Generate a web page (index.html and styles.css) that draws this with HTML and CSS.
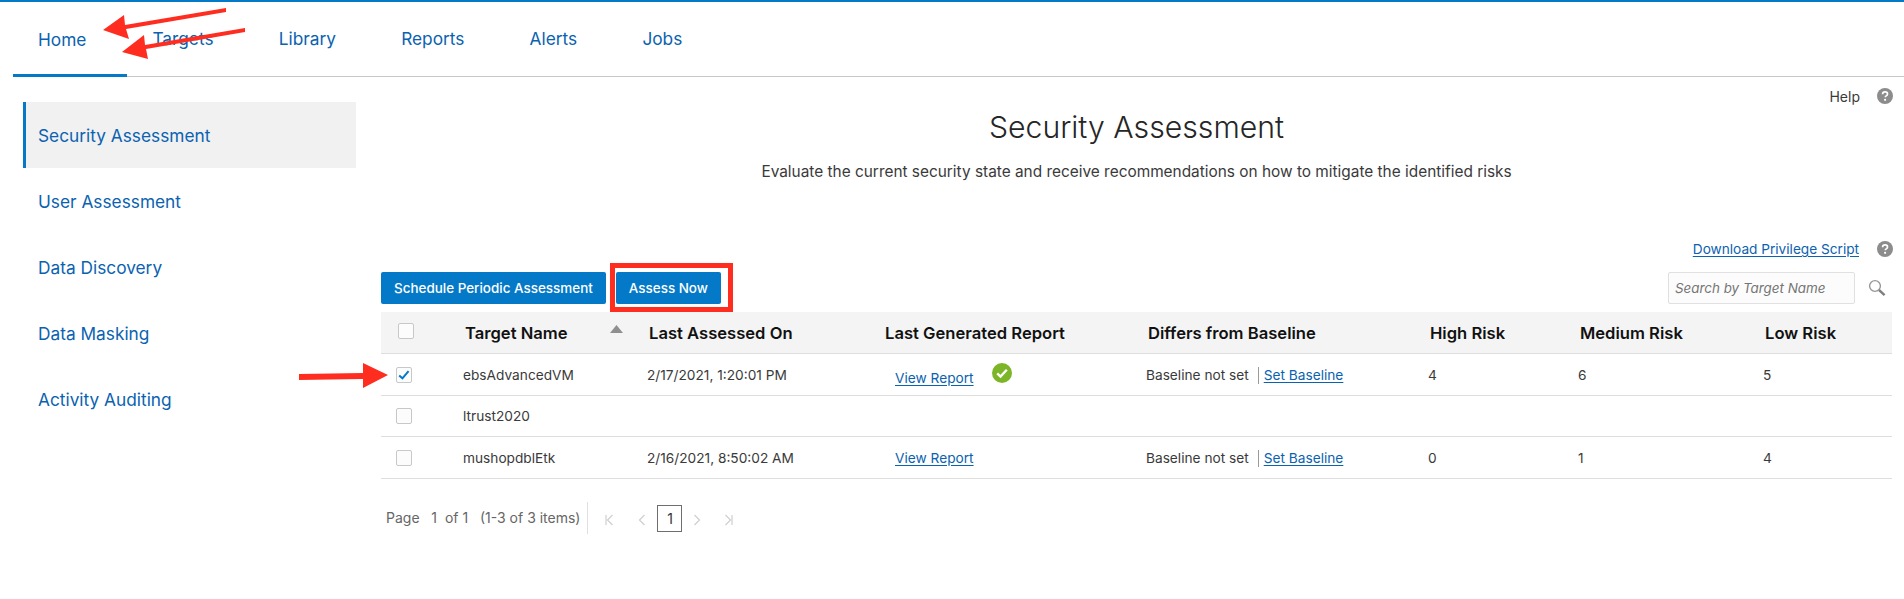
FILE: index.html
```html
<!DOCTYPE html>
<html lang="en">
<head>
<meta charset="utf-8">
<title>Security Assessment</title>
<link rel="stylesheet" href="styles.css">
</head>
<body>
<div class="app">
  <nav class="tabs">
    <a class="tab active">Home</a>
    <a class="tab">Targets</a>
    <a class="tab">Library</a>
    <a class="tab">Reports</a>
    <a class="tab">Alerts</a>
    <a class="tab">Jobs</a>
  </nav>
  <div class="body">
    <aside class="side">
      <a class="side-item active">Security Assessment</a>
      <a class="side-item">User Assessment</a>
      <a class="side-item">Data Discovery</a>
      <a class="side-item">Data Masking</a>
      <a class="side-item">Activity Auditing</a>
    </aside>
    <main class="main">
      <div class="help-row">
        <span class="help-text">Help</span>
        <svg class="help-icon" viewBox="0 0 16 16"><circle cx="8" cy="8" r="8" fill="#8c8c8c"/><path d="M5.6 6.2c0-1.4 1-2.3 2.5-2.3s2.4.8 2.4 2c0 1-.5 1.5-1.3 2-.6.4-.9.7-.9 1.4" fill="none" stroke="#fff" stroke-width="1.7"/><circle cx="8.1" cy="11.8" r="1.1" fill="#fff"/></svg>
      </div>
      <h1 class="title">Security Assessment</h1>
      <p class="subtitle">Evaluate the current security state and receive recommendations on how to mitigate the identified risks</p>
      <div class="download-row">
        <a class="link">Download Privilege Script</a>
        <svg class="help-icon" viewBox="0 0 16 16"><circle cx="8" cy="8" r="8" fill="#8c8c8c"/><path d="M5.6 6.2c0-1.4 1-2.3 2.5-2.3s2.4.8 2.4 2c0 1-.5 1.5-1.3 2-.6.4-.9.7-.9 1.4" fill="none" stroke="#fff" stroke-width="1.7"/><circle cx="8.1" cy="11.8" r="1.1" fill="#fff"/></svg>
      </div>
      <div class="toolbar">
        <button class="btn">Schedule Periodic Assessment</button>
        <button class="btn btn-marked">Assess Now<span class="red-box"></span></button>
        <div class="search">
          <span class="search-box">Search by Target Name</span>
          <svg class="search-icon" viewBox="0 0 18 18"><circle cx="7" cy="7" r="5.4" fill="none" stroke="#979797" stroke-width="1.4"/><path d="M11 11l5.6 5.2" stroke="#808080" stroke-width="2.4"/></svg>
        </div>
      </div>
      <div class="table">
        <div class="row head">
          <span class="cell"><span class="check head-check"></span></span>
          <span class="cell name">Target Name<svg class="sort" viewBox="0 0 13 8"><path d="M6.500 0L13 8H0z" fill="#8f8f8f"/></svg></span>
          <span class="cell">Last Assessed On</span>
          <span class="cell">Last Generated Report</span>
          <span class="cell">Differs from Baseline</span>
          <span class="cell">High Risk</span>
          <span class="cell">Medium Risk</span>
          <span class="cell">Low Risk</span>
        </div>
        <div class="row">
          <span class="cell"><span class="check"><svg viewBox="0 0 16 16"><path d="M2.500 8.500l3.700 3.300 7-8.300" fill="none" stroke="#0479c7" stroke-width="2.300"/></svg></span></span>
          <span class="cell">ebsAdvancedVM</span>
          <span class="cell">2/17/2021, 1:20:01 PM</span>
          <span class="cell report report-ok"><a class="link">View Report</a><svg class="ok" viewBox="0 0 20 20"><circle cx="10" cy="10" r="10" fill="#7cb526"/><path d="M5.200 10.300l3.300 3.200 6.300-6.800" fill="none" stroke="#fff" stroke-width="2.400"/></svg></span>
          <span class="cell baseline">Baseline not set<a class="link set">Set Baseline</a></span>
          <span class="cell">4</span>
          <span class="cell">6</span>
          <span class="cell">5</span>
        </div>
        <div class="row short">
          <span class="cell"><span class="check"></span></span>
          <span class="cell">ltrust2020</span>
          <span class="cell"></span>
          <span class="cell report"></span>
          <span class="cell baseline"></span>
          <span class="cell"></span>
          <span class="cell"></span>
          <span class="cell"></span>
        </div>
        <div class="row">
          <span class="cell"><span class="check"></span></span>
          <span class="cell">mushopdblEtk</span>
          <span class="cell">2/16/2021, 8:50:02 AM</span>
          <span class="cell report"><a class="link">View Report</a></span>
          <span class="cell baseline">Baseline not set<a class="link set">Set Baseline</a></span>
          <span class="cell">0</span>
          <span class="cell">1</span>
          <span class="cell">4</span>
        </div>
      </div>
      <div class="pager">
        <span class="pager-text">Page&nbsp;&nbsp; 1 &nbsp;of 1 &nbsp; (1-3 of 3 items)</span>
        <svg class="pg first" viewBox="0 0 8 12"><path d="M1 1v10M7.500 1L2.500 6l5 5" fill="none" stroke="#cfcfcf" stroke-width="1.200"/></svg>
        <svg class="pg prev" viewBox="0 0 8 12"><path d="M6.500 1L1.500 6l5 5" fill="none" stroke="#cfcfcf" stroke-width="1.200"/></svg>
        <span class="page-box">1</span>
        <svg class="pg next" viewBox="0 0 8 12"><path d="M1.500 1l5 5-5 5" fill="none" stroke="#cfcfcf" stroke-width="1.200"/></svg>
        <svg class="pg last" viewBox="0 0 8 12"><path d="M7 1v10M.5 1l5 5-5 5" fill="none" stroke="#cfcfcf" stroke-width="1.200"/></svg>
      </div>
    </main>
  </div>
</div>
<svg class="arrows" width="1904" height="599" viewBox="0 0 1904 599">
  <path d="M226 8L226 12L126 29L129 39L103 30L124 15L125 25Z" fill="#ff2d20"/>
  <path d="M245 28L245 32L146 49L148 59L122 52L144 35L145 45Z" fill="#ff2d20"/>
  <path d="M299 374L363 373L363 363L388 375L363 388L363 379L299 380Z" fill="#ff2d20"/>
</svg>
</body>
</html>
```
FILE: styles.css
```css
* { box-sizing: border-box; }
html, body { margin: 0; padding: 0; background: #fff; }
body {
  font-family: Inter, "Liberation Sans", sans-serif;
  color: #3a3a3a;
  height: 599px;
  overflow: hidden;
  position: relative;
}
.app { border-top: 2px solid #0479c7; }

.tabs {
  display: flex;
  height: 75px;
  margin-left: 13px;
  border-bottom: 1px solid #c8c8c8;
}
.tab {
  display: flex;
  align-items: center;
  padding: 0 40.2px 1px 25px;
  font-size: 17.3px;
  color: #0a62b0;
}
.tab.active { box-shadow: inset 0 -3px 0 #0479c7; padding-right: 41px; height: 75px; }

.body { display: flex; }
.side { width: 356px; padding: 25px 0 0 23px; flex: none; }
.side-item {
  display: flex;
  align-items: center;
  height: 66px;
  padding: 1px 0 0 15px;
  font-size: 17.3px;
  color: #0a62b0;
}
.side-item.active { background: #f1f1f1; border-left: 3px solid #0479c7; padding-left: 12px; }

.main { width: 1511px; margin-left: 25px; flex: none; }
.help-row {
  display: flex;
  justify-content: flex-end;
  align-items: center;
  height: 16px;
  margin-top: 11px;
  margin-right: -1px;
  font-size: 14px;
  gap: 17px;
}
.help-icon { width: 16px; height: 16px; display: block; flex: none; }
.title {
  margin: 3px 0 0;
  text-align: center;
  font-size: 30.2px;
  line-height: 40px;
  font-weight: 300;
  color: #262626;
}
.subtitle {
  margin: 15px 0 0;
  text-align: center;
  font-size: 15.4px;
  line-height: 20px;
  color: #3a3a3a;
}
.download-row {
  display: flex;
  justify-content: flex-end;
  align-items: center;
  gap: 18px;
  height: 16px;
  margin-top: 59px;
  margin-right: -1px;
  font-size: 13.65px;
}
.link { color: #0a62b0; text-decoration: underline; text-underline-offset: 2px; }

.toolbar { display: flex; align-items: center; margin-top: 15px; height: 32px; gap: 10px; }
.btn {
  height: 32px;
  padding: 0 13px;
  border: 0;
  border-radius: 2px;
  background: #0479c7;
  color: #fff;
  font: 500 13.45px Inter, "Liberation Sans", sans-serif;
}
.btn-marked { position: relative; }
.red-box {
  position: absolute;
  left: -6px;
  right: -12px;
  top: -9px;
  bottom: -8px;
  border: 5px solid #ff2d20;
}
.search { margin-left: auto; display: flex; align-items: center; margin-right: 6px; }
.search-box {
  width: 187px;
  height: 32px;
  padding-left: 6px;
  line-height: 30px;
  border: 1px solid #e0e0e0;
  border-radius: 2px;
  background: #fcfcfc;
  color: #757575;
  font-size: 13.4px;
  font-style: italic;
}
.search-icon { width: 18px; height: 18px; margin-left: 13px; }

.table { margin-top: 8px; }
.row {
  display: grid;
  grid-template-columns: 82px 184px 236px 263px 282px 150px 185px 129px;
  height: 42px;
  border-bottom: 1px solid #dedede;
  font-size: 13.7px;
  color: #3a3a3a;
  align-items: center;
}
.row .report { padding-left: 12px; }
.cell { display: flex; align-items: center; }
.row.short { height: 41px; }
.head {
  background: #f4f4f4;
  color: #111;
  font-size: 16.6px;
  font-weight: 600;
}
.head .cell { padding-left: 2px; }
.head .cell:first-child { padding-left: 0; }
.name { position: relative; }
.sort { position: absolute; left: 147px; top: 2px; width: 13px; height: 8px; }
.check {
  display: block;
  width: 16px;
  height: 16px;
  margin-left: 15px;
  border: 1px solid #c8c8c8;
  border-radius: 2px;
  background: #fcfcfc;
}
.check svg { display: block; width: 14px; height: 14px; }
.head-check { margin-left: 17px; margin-top: -4px; }
.report-ok .link { position: relative; top: 3px; }
.ok { width: 20px; height: 20px; margin-left: 18px; margin-top: -4px; }
.set { margin-left: 10px; padding-left: 5px; position: relative; }
.set::before {
  content: "";
  position: absolute;
  left: -1px;
  top: 0;
  height: 17px;
  border-left: 1px solid #9a9a9a;
}

.pager { display: flex; align-items: center; margin: 23px 0 0 5px; height: 32px; font-size: 14px; color: #666; }
.pager-text { padding-right: 7px; border-right: 1px solid #e0e0e0; line-height: 32px; height: 32px; }
.pg { width: 8px; height: 12px; display: block; flex: none; margin-top: 3px; }
.first { margin-left: 17px; }
.prev { margin-left: 25px; }
.next { margin-left: 11px; }
.last { margin-left: 24px; }
.page-box {
  display: flex;
  align-items: center;
  justify-content: center;
  width: 25px;
  height: 27px;
  margin-left: 11px;
  border: 1px solid #6e6e6e;
  color: #333;
}
.arrows { position: absolute; left: 0; top: 0; pointer-events: none; }
```
